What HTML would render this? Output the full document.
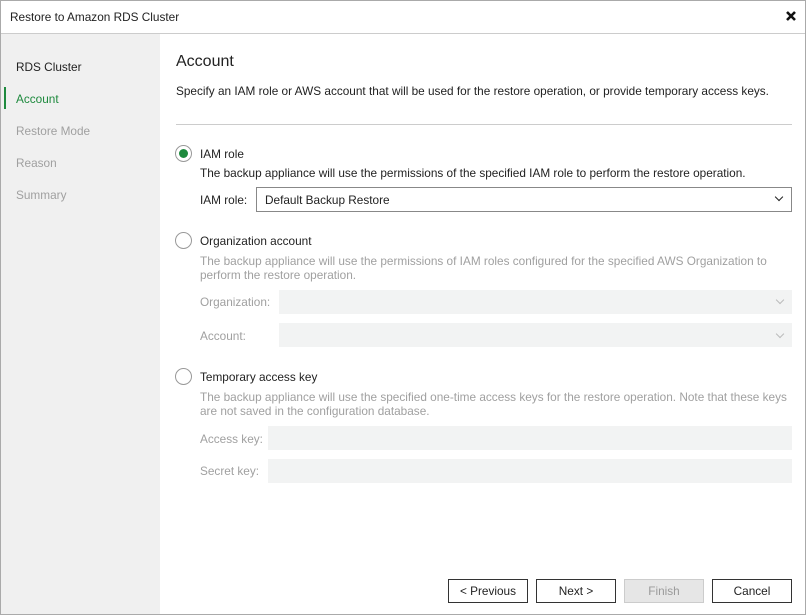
<!DOCTYPE html>
<html><head><style>
*{margin:0;padding:0;box-sizing:border-box}
body{width:806px;height:615px;background:#fff;font-family:"Liberation Sans",sans-serif;font-size:11.8px;color:#222;position:relative;overflow:hidden}
.a{position:absolute;white-space:nowrap;line-height:14px;margin-top:1px}
.g{color:#a0a0a0}
.box{position:absolute;background:#f2f3f3}
.radio{position:absolute;width:17px;height:17px;border:1px solid #999;border-radius:50%;background:#fff}
.btn{position:absolute;top:579px;height:24px;width:80px;border:1px solid #333;background:#fff;text-align:center;line-height:23px}
.chev{position:absolute;width:6px;height:6px;border-right:1.5px solid #222;border-bottom:1.5px solid #222;transform:rotate(45deg)}
</style></head><body>
<div style="position:absolute;left:0;top:0;width:806px;height:615px;border:1px solid #aaa"></div>
<div style="position:absolute;left:1px;top:33px;width:804px;height:1px;background:#ccc"></div>
<div class="a" style="left:10px;top:9px;">Restore to Amazon RDS Cluster</div>
<svg style="position:absolute;left:786px;top:11px" width="10" height="10" viewBox="0 0 10 10"><path d="M1 1L9 9M9 1L1 9" stroke="#111" stroke-width="2.6"/></svg>
<div style="position:absolute;left:1px;top:34px;width:159px;height:580px;background:#f0f0f0"></div>
<div class="a" style="left:16px;top:59px;">RDS Cluster</div>
<div style="position:absolute;left:4px;top:87px;width:2px;height:22px;background:#1e8a3e"></div>
<div class="a" style="left:16px;top:91px;color:#1e8a3e">Account</div>
<div class="a g" style="left:16px;top:123px;">Restore Mode</div>
<div class="a g" style="left:16px;top:155px;">Reason</div>
<div class="a g" style="left:16px;top:187px;">Summary</div>

<div class="a" style="left:176px;top:52px;font-size:16px;line-height:18px">Account</div>
<div class="a" style="left:176px;top:83px;">Specify an IAM role or AWS account that will be used for the restore operation, or provide temporary access keys.</div>
<div style="position:absolute;left:176px;top:124px;width:616px;height:1px;background:#ccc"></div>

<div class="radio" style="left:175px;top:145px"><div style="position:absolute;left:3px;top:3px;width:9px;height:9px;border-radius:50%;background:#1e8a3e"></div></div>
<div class="a" style="left:200px;top:146px;">IAM role</div>
<div class="a" style="left:200px;top:165px;">The backup appliance will use the permissions of the specified IAM role to perform the restore operation.</div>
<div class="a" style="left:200px;top:192px;">IAM role:</div>
<div style="position:absolute;left:256px;top:187px;width:536px;height:25px;border:1px solid #888;background:#fff"></div>
<div class="a" style="left:265px;top:192px;">Default Backup Restore</div>
<div class="chev" style="left:776px;top:194px"></div>

<div class="radio" style="left:175px;top:232px"></div>
<div class="a" style="left:200px;top:233px;">Organization account</div>
<div class="a g" style="left:200px;top:253px;">The backup appliance will use the permissions of IAM roles configured for the specified AWS Organization to</div>
<div class="a g" style="left:200px;top:267px;">perform the restore operation.</div>
<div class="a g" style="left:200px;top:294px;">Organization:</div>
<div class="box" style="left:279px;top:290px;width:513px;height:24px"></div>
<div class="chev" style="left:777px;top:297px;border-color:#bbb;border-width:1px"></div>
<div class="a g" style="left:200px;top:328px;">Account:</div>
<div class="box" style="left:279px;top:323px;width:513px;height:24px"></div>
<div class="chev" style="left:777px;top:331px;border-color:#bbb;border-width:1px"></div>

<div class="radio" style="left:175px;top:368px"></div>
<div class="a" style="left:200px;top:369px;">Temporary access key</div>
<div class="a g" style="left:200px;top:389px;">The backup appliance will use the specified one-time access keys for the restore operation. Note that these keys</div>
<div class="a g" style="left:200px;top:403px;">are not saved in the configuration database.</div>
<div class="a g" style="left:200px;top:431px;">Access key:</div>
<div class="box" style="left:268px;top:426px;width:524px;height:24px"></div>
<div class="a g" style="left:200px;top:463px;">Secret key:</div>
<div class="box" style="left:268px;top:459px;width:524px;height:24px"></div>

<div class="btn" style="left:448px">&lt; Previous</div>
<div class="btn" style="left:536px">Next &gt;</div>
<div class="btn" style="left:624px;border-color:#ccc;background:#e6e6e6;color:#9a9a9a">Finish</div>
<div class="btn" style="left:712px">Cancel</div>
</body></html>
